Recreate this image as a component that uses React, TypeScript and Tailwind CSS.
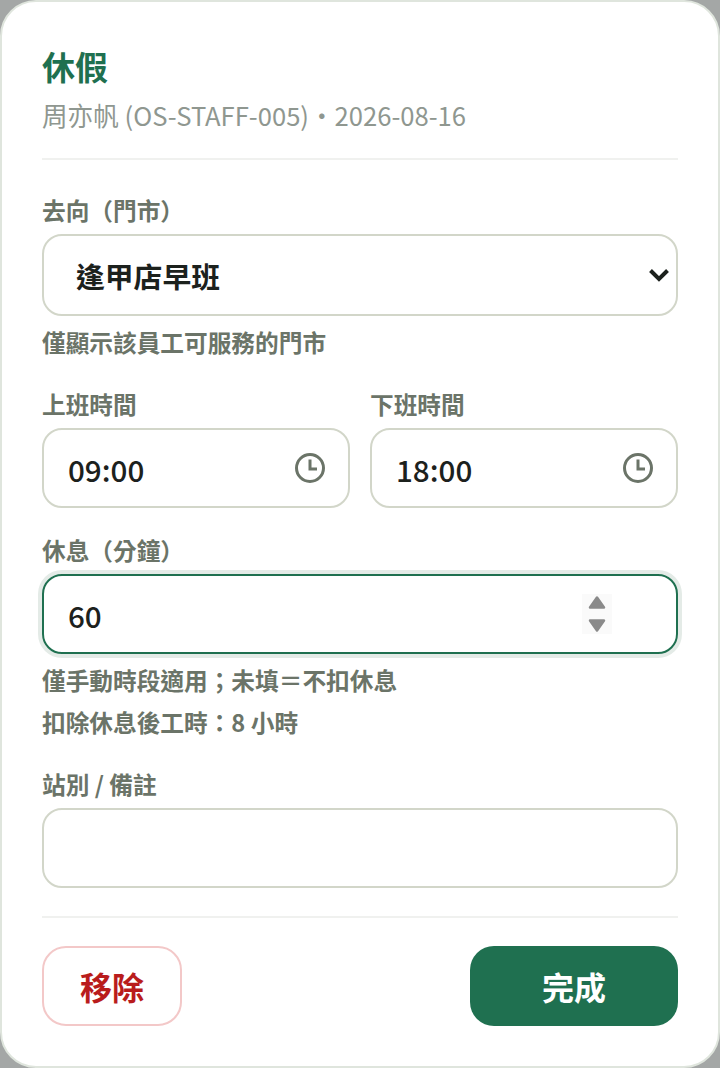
const font = { fontFamily: '"Noto Sans CJK TC",sans-serif' };

function Clock() {
  return (
    <svg width="32" height="32" viewBox="0 0 32 32" fill="none" stroke="#6b7468" strokeWidth="3">
      <circle cx="16" cy="16" r="13.5" />
      <path d="M16 7.5V17H23" />
    </svg>
  );
}

function Label({ children }: { children: React.ReactNode }) {
  return <div className="text-[23.68px] leading-[28px] font-semibold text-[#6b7468]">{children}</div>;
}

function TimeField({ label, value }: { label: string; value: string }) {
  return (
    <div className="flex-1 flex flex-col gap-[10px]">
      <Label>{label}</Label>
      <div className="h-[80px] rounded-[20px] border-2 border-[#d2d6c9] flex items-center justify-between pl-[24px] pr-[22px]">
        <span className="pt-[4px] text-[29.6px] font-medium text-[#1c211d]">{value}</span>
        <Clock />
      </div>
    </div>
  );
}

export default function App() {
  return (
    <div className="w-[720px] h-[1068px] bg-[#a4a7a6] overflow-hidden" style={font}>
      <div className="h-full rounded-[36px] border-2 border-[#dfe5dd] bg-white px-[40px] pt-[42px] pb-[40px] flex flex-col">
        <div className="text-[33px] leading-[44px] font-bold text-[#1f7050]">休假</div>
        <div className="mt-[9px] text-[25.6px] leading-[36px] text-[#8f9790]">周亦帆 (OS-STAFF-005)・2026-08-16</div>
        <div className="mt-[25px] h-[2px] bg-[#f0f1ef]" />

        <div className="mt-[36px]"><Label>去向（門市）</Label></div>
        <div className="mt-[10px] h-[82px] rounded-[20px] border-2 border-[#d2d6c9] flex items-center justify-between pl-[32px] pr-[6px]">
          <span className="pt-[2px] text-[28.8px] font-semibold text-[#1c211d]">逢甲店早班</span>
          <svg width="22" height="16" viewBox="0 0 22 16" fill="none" stroke="#1c211d" strokeWidth="4">
            <path d="M2.5 3.5L11 12L19.5 3.5" />
          </svg>
        </div>
        <div className="mt-[10px] text-[23.68px] leading-[32px] font-semibold text-[#6b7468]">僅顯示該員工可服務的門市</div>

        <div className="mt-[32px] flex gap-[20px]">
          <TimeField label="上班時間" value="09:00" />
          <TimeField label="下班時間" value="18:00" />
        </div>

        <div className="mt-[28px]"><Label>休息（分鐘）</Label></div>
        <div className="mt-[10px] h-[80px] rounded-[20px] border-2 border-[#1f7050] shadow-[0_0_0_4px_#e4ebe7] flex items-center justify-between pl-[24px]">
          <span className="pt-[4px] text-[29.6px] font-medium text-[#1c211d]">60</span>
          <svg className="mr-[64px]" width="30" height="40" viewBox="0 0 30 40">
            <rect width="30" height="40" fill="#fafafa" />
            <path d="M15 3.5L22 13.5H8Z" fill="#8a8a8a" stroke="#8a8a8a" strokeWidth="2.5" strokeLinejoin="round" />
            <path d="M15 36.5L22 26.5H8Z" fill="#8a8a8a" stroke="#8a8a8a" strokeWidth="2.5" strokeLinejoin="round" />
          </svg>
        </div>
        <div className="mt-[10px] text-[23.68px] leading-[32px] font-semibold text-[#6b7468]">僅手動時段適用；未填＝不扣休息</div>
        <div className="mt-[10px] text-[23.68px] leading-[32px] font-semibold text-[#6b7468]">扣除休息後工時：8 小時</div>

        <div className="mt-[32px]"><Label>站別 / 備註</Label></div>
        <div className="mt-[10px] h-[80px] rounded-[20px] border-2 border-[#d2d6c9]" />

        <div className="mt-[28px] h-[2px] bg-[#f0f1ef]" />
        <div className="mt-[28px] flex justify-between">
          <div className="w-[140px] h-[80px] rounded-[24px] border-2 border-[#f3c8c8] flex items-center justify-center text-[32px] font-bold text-[#b91c1c]">移除</div>
          <div className="w-[208px] h-[80px] rounded-[24px] bg-[#1f7050] flex items-center justify-center text-[32px] font-bold text-white">完成</div>
        </div>
      </div>
    </div>
  );
}
